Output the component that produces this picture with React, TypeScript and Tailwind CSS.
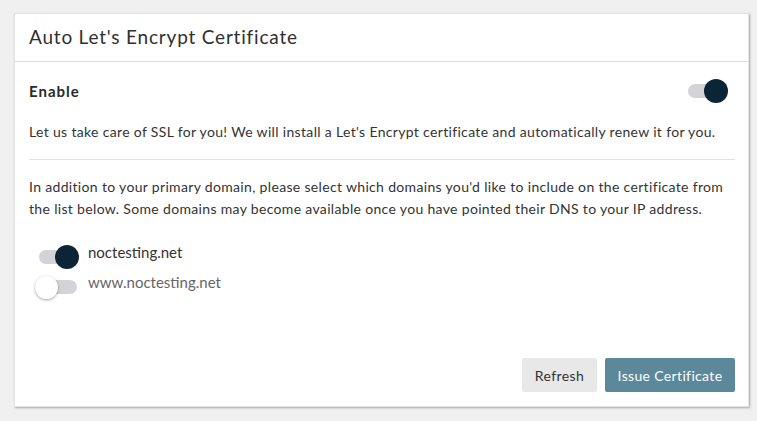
import React, { useState } from 'react'

const font = { fontFamily: 'Lato, "Open Sans", sans-serif' }

const Toggle = ({ on, onClick }: { on: boolean; onClick: () => void }) => (
    <button
        type="button"
        onClick={onClick}
        className="relative w-[44px] h-[24px] shrink-0 cursor-pointer"
    >
        <span className="absolute left-[4px] right-[2px] top-[5px] h-[14px] rounded-full bg-[#d3d3d8]" />
        <span
            className={
                on
                    ? 'absolute top-0 right-0 w-[24px] h-[24px] rounded-full bg-[#0b2537]'
                    : 'absolute top-[1px] left-0 w-[23px] h-[23px] rounded-full bg-white shadow-[0_1px_3px_rgba(0,0,0,0.35)]'
            }
        />
    </button>
)

export default function App() {
    const [enabled, setEnabled] = useState(true)
    const [domains, setDomains] = useState([
        { name: 'noctesting.net', on: true },
        { name: 'www.noctesting.net', on: false },
    ])

    const flip = (i: number) =>
        setDomains(d => d.map((x, j) => (j === i ? { ...x, on: !x.on } : x)))

    return (
        <div className="min-h-screen bg-[#f0f0f0] pt-[13px] pl-[14px]" style={font}>
            <div className="w-[735px] bg-white border border-[#e2e2e2] shadow-[1px_1px_2px_rgba(0,0,0,0.3)] text-[#333]">
                <div className="h-[48px] pl-[14px] pr-[13px] flex items-center border-b border-[#e0e0e0]">
                    <h2 className="text-[19px] tracking-[0.8px] text-[#2f2f2f]">Auto Let's Encrypt Certificate</h2>
                </div>

                <div className="pl-[14px] pr-[13px] pt-[17px] pb-[14px]">
                    <div className="flex items-center justify-between pr-[7px]">
                        <span className="text-[15px] font-bold tracking-[1px] text-[#2a2a2a]">Enable</span>
                        <Toggle on={enabled} onClick={() => setEnabled(!enabled)} />
                    </div>

                    <p className="mt-[18px] text-[14px] leading-[22px] tracking-[0.33px]">
                        Let us take care of SSL for you! We will install a Let's Encrypt certificate and automatically renew it for you.
                    </p>

                    <hr className="mt-[16px] border-[#e3e3e3]" />

                    <p className="mt-[16px] text-[14px] leading-[22px] tracking-[0.33px]">
                        In addition to your primary domain, please select which domains you'd like to include on the certificate from the list below. Some domains may become available once you have pointed their DNS to your IP address.
                    </p>

                    <div className="mt-[25px] flex flex-col gap-[6px] pl-[6px]">
                        {domains.map((d, i) => (
                            <div key={d.name} className="flex items-center gap-[9px]">
                                <Toggle on={d.on} onClick={() => flip(i)} />
                                <span className={d.on ? 'text-[15px] text-[#333] -mt-[10px]' : 'text-[15px] text-[#666] -mt-[9px]'}>
                                    {d.name}
                                </span>
                            </div>
                        ))}
                    </div>

                    <div className="mt-[59px] flex justify-end gap-[8px]">
                        <button className="h-[34px] w-[75px] bg-[#e8e8e8] text-[14px] tracking-[0.4px] text-[#333] rounded-[2px]">
                            Refresh
                        </button>
                        <button className="h-[34px] w-[130px] bg-[#5b889b] text-[14px] tracking-[0.35px] text-white rounded-[2px]">
                            Issue Certificate
                        </button>
                    </div>
                </div>
            </div>
        </div>
    )
}
